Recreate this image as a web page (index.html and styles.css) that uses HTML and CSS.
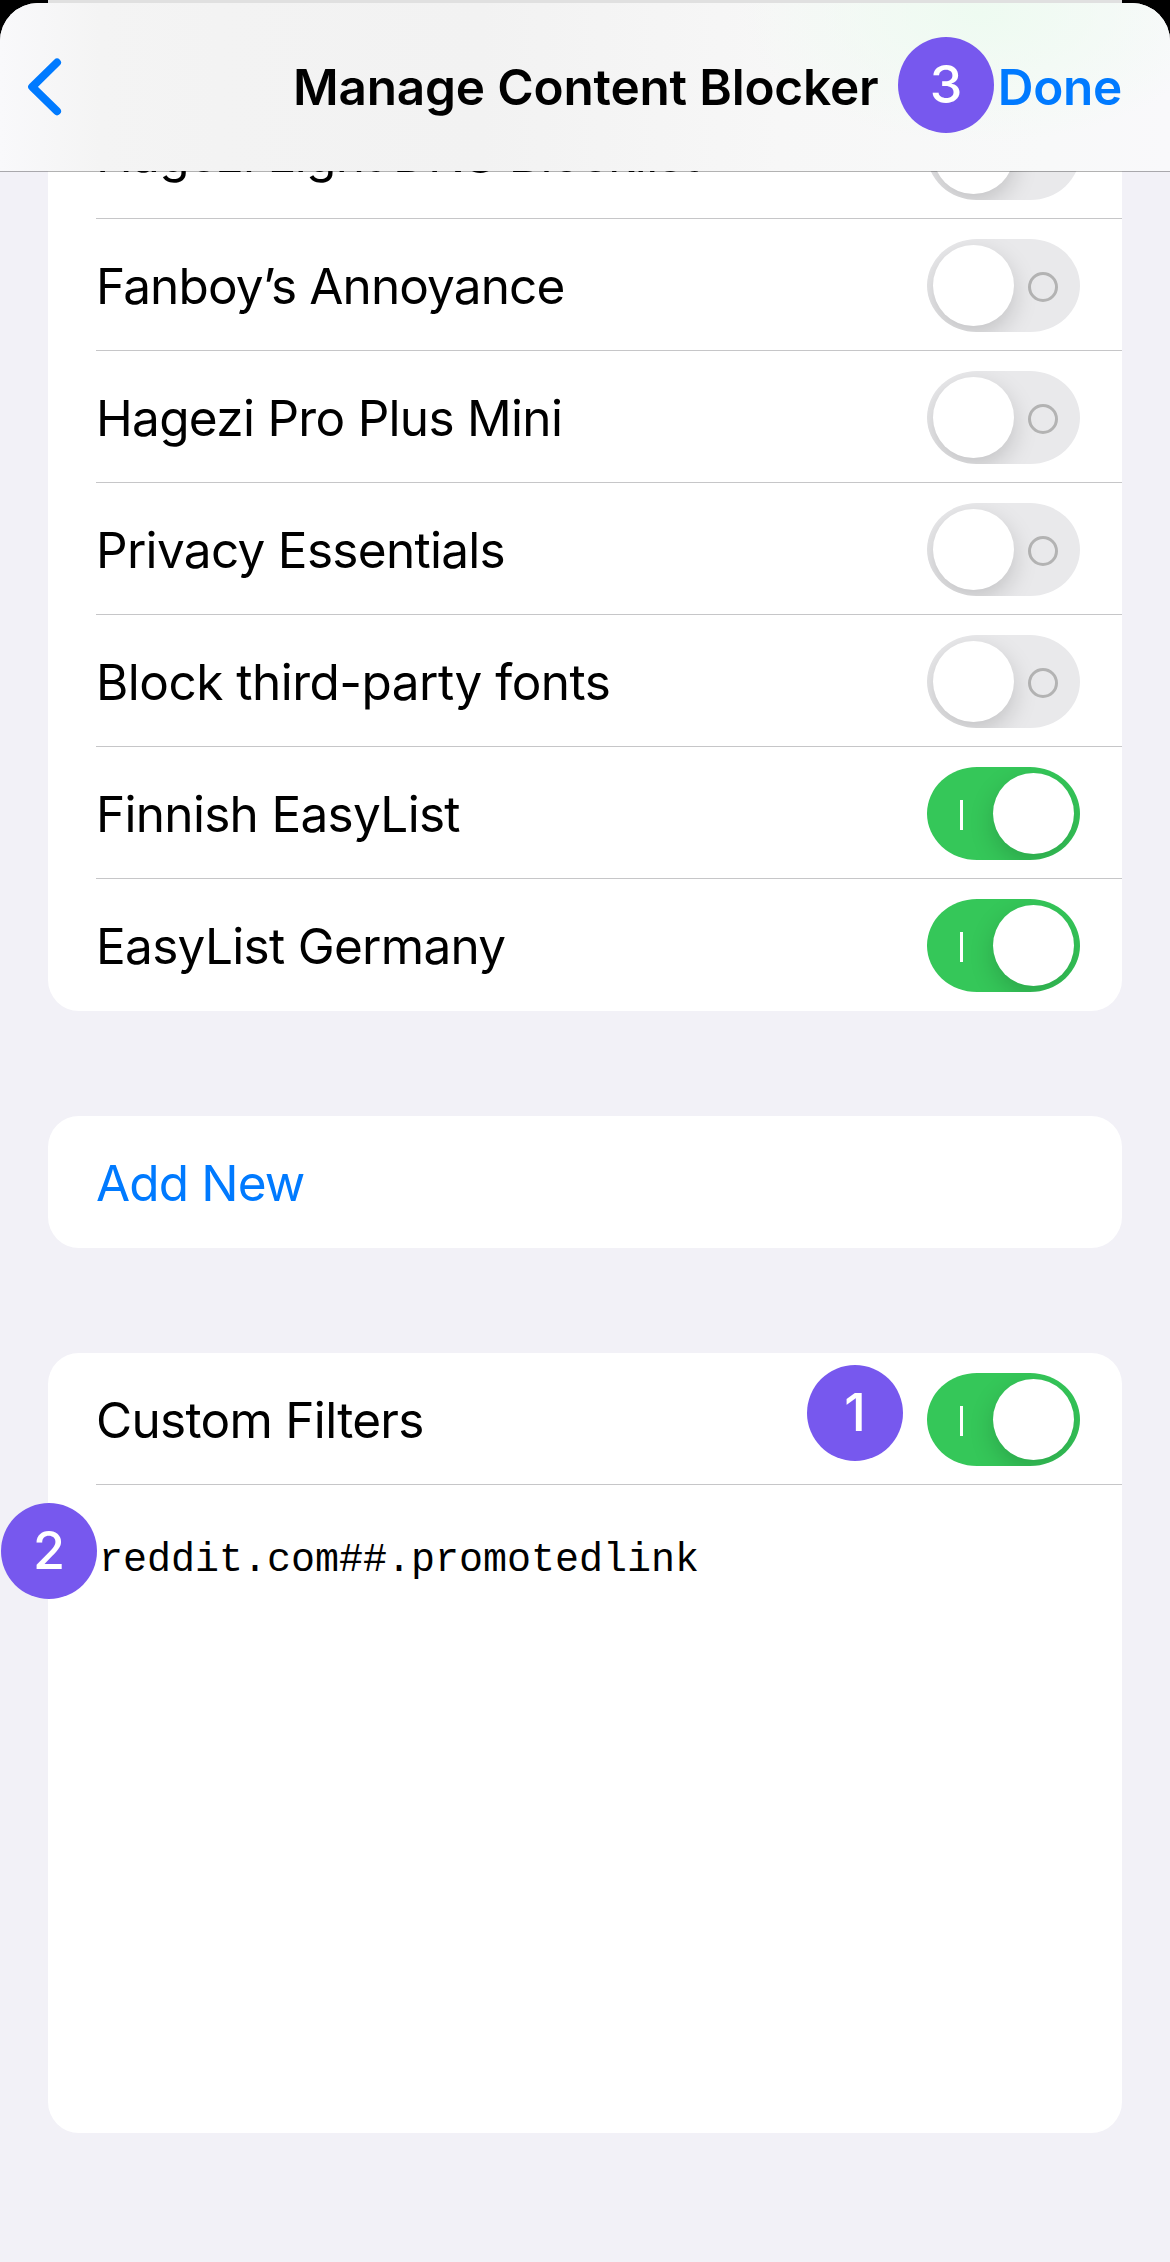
FILE: index.html
```
<!DOCTYPE html>
<html lang="en">
<head>
<meta charset="utf-8">
<title>Manage Content Blocker</title>
<link rel="stylesheet" href="styles.css">
</head>
<body>
<div class="behind"></div>
<main class="sheet">
  <header class="navbar">
    <svg class="back" width="34" height="58" viewBox="0 0 34 58"><path d="M29 4.5 4.2 28.8 29 53.2" fill="none" stroke="#007aff" stroke-width="8" stroke-linecap="round" stroke-linejoin="round"/></svg>
    <h1 class="title">Manage Content Blocker</h1>
    <a class="done">Done</a>
    <span class="badge badge-3">3</span>
  </header>
  <div class="content">
    <section class="card card-lists">
      <div class="row"><span class="label">Hagezi Light DNS Blocklist</span><span class="toggle"></span></div>
      <div class="row"><span class="label tight">Fanboy’s Annoyance</span><span class="toggle"></span></div>
      <div class="row"><span class="label">Hagezi Pro Plus Mini</span><span class="toggle"></span></div>
      <div class="row"><span class="label">Privacy Essentials</span><span class="toggle"></span></div>
      <div class="row"><span class="label loose">Block third-party fonts</span><span class="toggle"></span></div>
      <div class="row"><span class="label">Finnish EasyList</span><span class="toggle on"></span></div>
      <div class="row"><span class="label">EasyList Germany</span><span class="toggle on"></span></div>
    </section>
    <section class="card">
      <div class="row"><a class="label link tight">Add New</a></div>
    </section>
    <section class="card">
      <div class="row"><span class="label">Custom Filters</span><span class="toggle on"></span><span class="badge badge-1">1</span></div>
      <div class="editor">reddit.com##.promotedlink<span class="badge badge-2">2</span></div>
    </section>
  </div>
</main>
</body>
</html>
```
FILE: styles.css
```
*, *::before, *::after { box-sizing: border-box; }
body {
  margin: 0;
  background: #000;
  color: #000;
  font-family: Inter, "Liberation Sans", sans-serif;
  font-size: 49.5px;
  line-height: 60px;
}
.behind { height: 3px; margin: 0 48px; background: #e0e0e0; }
.sheet {
  height: 2259px;
  border-radius: 38px 38px 0 0;
  overflow: hidden;
  background: #f2f1f7;
}
.navbar {
  position: relative;
  display: flex;
  align-items: center;
  height: 168px;
  padding: 0 48px 0 28px;
  background:
    radial-gradient(ellipse 240px 130px at 980px 10px, #eefbf1 0%, rgba(242, 250, 244, 0) 100%),
    linear-gradient(90deg, #f9f9fb 0, #f4f4f4 100px, #f3f3f3 220px, #f2f2f2 480px, #f7f7f7 780px, #f8f9f9 1050px, #f9f9fb 1170px);
}
.back { display: block; flex: none; }
.title {
  flex: 1;
  margin: 0 0 0 231px;
  font-size: 49.5px;
  font-weight: 600;
  letter-spacing: -.18px;
  white-space: nowrap;
}
.done { color: #007aff; font-weight: 600; letter-spacing: -.3px; }
.content {
  position: relative;
  display: flex;
  flex-direction: column;
  gap: 105px;
  height: 2091px;
  padding: 0 48px;
  overflow: hidden;
}
.content::after {
  content: "";
  position: absolute;
  left: 0;
  right: 0;
  top: 0;
  height: 1px;
  background: rgba(0, 0, 0, .3);
}
.card { border-radius: 31px; background: #fff; }
.card-lists { margin-top: -84px; }
.row {
  position: relative;
  display: flex;
  align-items: center;
  justify-content: space-between;
  height: 132px;
  padding: 0 42px 0 48px;
}
.row:not(:last-child)::after {
  content: "";
  position: absolute;
  left: 48px;
  right: 0;
  bottom: 0;
  height: 1px;
  background: #c6c6c8;
}
.label { padding-top: 2px; letter-spacing: -.7px; white-space: nowrap; }
.label.tight { letter-spacing: -.87px; }
.label.loose { letter-spacing: -.52px; }
.link { color: #007aff; }
.toggle {
  position: relative;
  flex: none;
  width: 153px;
  height: 93px;
  overflow: hidden;
  border-radius: 50px / 46.5px;
  background: #e9e9eb;
}
.toggle::before {
  content: "";
  position: absolute;
  left: 101px;
  top: 33px;
  width: 30px;
  height: 30px;
  border: 3px solid #b3b3b3;
  border-radius: 50%;
}
.toggle::after {
  content: "";
  position: absolute;
  left: 6px;
  top: 6px;
  width: 81px;
  height: 81px;
  border-radius: 50%;
  background: #fff;
  box-shadow: 0 9px 24px rgba(0, 0, 0, .17);
}
.toggle.on { background: #35c759; }
.toggle.on::before { left: 33px; width: 3px; border: 0; border-radius: 0; background: #fff; }
.toggle.on::after { left: 66px; }
.editor {
  position: relative;
  height: 648px;
  padding: 46px 51px;
  font-family: "Liberation Mono", monospace;
  font-size: 40px;
  white-space: nowrap;
}
.badge {
  position: absolute;
  z-index: 1;
  width: 96px;
  height: 96px;
  border-radius: 50%;
  background: #7758ee;
  color: #fff;
  font: 500 52px/95px Inter, "Liberation Sans", sans-serif;
  text-align: center;
}
.badge-1 { left: 759px; top: 12px; }
.badge-2 { left: -47px; top: 18px; }
.badge-3 { left: 898px; top: 34px; }
```
